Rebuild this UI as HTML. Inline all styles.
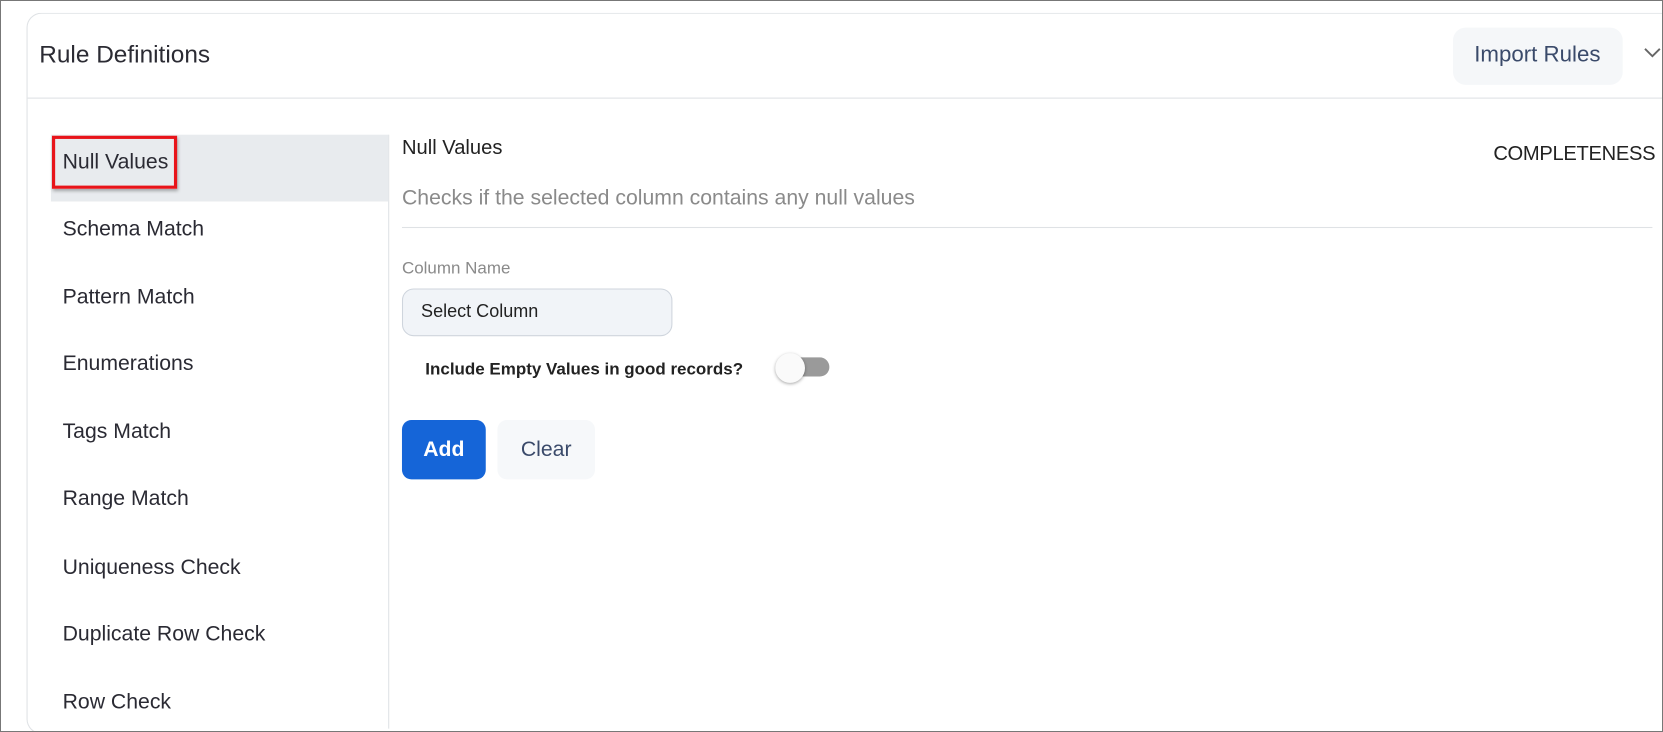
<!DOCTYPE html>
<html><head><meta charset="utf-8"><style>
*{box-sizing:border-box;margin:0;padding:0}
html,body{width:1663px;height:732px;overflow:hidden}
body{background:#fff;font-family:"Liberation Sans",sans-serif;position:relative;color:#222}
.frame{position:absolute;left:0;top:0;width:1663px;height:732px;border:1px solid #777;z-index:5}
.wrap{position:absolute;left:0;top:0;width:1568px;height:690px;transform:scale(1.0606);transform-origin:0 0;overflow:hidden}
.card{position:absolute;left:25px;top:12px;width:1543px;height:680px;border:1px solid #dfe2e5;border-right:none;border-radius:14px 0 0 14px;background:#fff}
.hdr{position:absolute;left:0;top:0;right:0;height:80px;border-bottom:1px solid #dfe2e5}
.t{position:absolute;white-space:nowrap}
.side{position:absolute;left:48px;top:127px;width:319px;height:560px;border-right:1px solid #dfe2e5}
.item{position:absolute;left:0;width:318px;height:63px;font-size:20px;color:#2a2a33;padding-left:11px;line-height:53px}
</style></head><body>
<div class="frame"></div>
<div class="wrap">
<div class="card">
 <div class="hdr"></div>
</div>
<div class="t" style="left:37px;top:38px;font-size:23px;color:#2b2b33">Rule Definitions</div>
<div style="position:absolute;left:1370px;top:26px;width:160px;height:54px;background:#f5f7f9;border-radius:12px"></div>
<div class="t" style="left:1390px;top:40px;font-size:21px;color:#3a4a6a">Import Rules</div>
<svg style="position:absolute;left:1550px;top:44px" width="16" height="12"><path d="M1 2 L8 9 L15 2" fill="none" stroke="#666" stroke-width="1.8"/></svg>

<div class="side">
 <div class="item" style="top:0;background:#e8ebee"></div>
 <div class="item" style="top:0">Null Values</div>
 <div class="item" style="top:63px">Schema Match</div>
 <div class="item" style="top:127px">Pattern Match</div>
 <div class="item" style="top:190px">Enumerations</div>
 <div class="item" style="top:254px">Tags Match</div>
 <div class="item" style="top:317px">Range Match</div>
 <div class="item" style="top:382px">Uniqueness Check</div>
 <div class="item" style="top:445px">Duplicate Row Check</div>
 <div class="item" style="top:509px">Row Check</div>
</div>
<div style="position:absolute;left:49px;top:128px;width:118px;height:50px;border:3px solid #e8141a;box-shadow:1px 2px 3px rgba(0,0,0,.3)"></div>

<div class="t" style="left:379px;top:129px;font-size:19px;color:#222">Null Values</div>
<div class="t" style="left:1408px;top:135px;font-size:19px;color:#222;letter-spacing:-0.3px">COMPLETENESS</div>
<div class="t" style="left:379px;top:176px;font-size:20px;color:#8a8a8a">Checks if the selected column contains any null values</div>
<div style="position:absolute;left:379px;top:214px;width:1179px;height:1px;background:#dfe2e5"></div>
<div class="t" style="left:379px;top:245px;font-size:16px;color:#8a8a8a">Column Name</div>
<div style="position:absolute;left:379px;top:272px;width:255px;height:45px;background:#f1f4f8;border:1px solid #cfd5dd;border-radius:11px"></div>
<div class="t" style="left:397px;top:284px;font-size:17px;color:#222">Select Column</div>
<div class="t" style="left:401px;top:340px;font-size:16px;font-weight:bold;color:#222">Include Empty Values in good records?</div>
<div style="position:absolute;left:736px;top:337px;width:46px;height:18px;background:#9a9a9a;border-radius:9px"></div>
<div style="position:absolute;left:731px;top:333px;width:28px;height:28px;background:#fafafa;border-radius:50%;box-shadow:0 1px 3px rgba(0,0,0,.35)"></div>
<div style="position:absolute;left:379px;top:396px;width:79px;height:56px;background:#1565d8;border-radius:9px;color:#fff;font-size:20px;font-weight:bold;text-align:center;line-height:56px">Add</div>
<div style="position:absolute;left:469px;top:396px;width:92px;height:56px;background:#f6f8fa;border-radius:9px;color:#3a4a6a;font-size:20px;text-align:center;line-height:56px">Clear</div>
</div>
</body></html>
